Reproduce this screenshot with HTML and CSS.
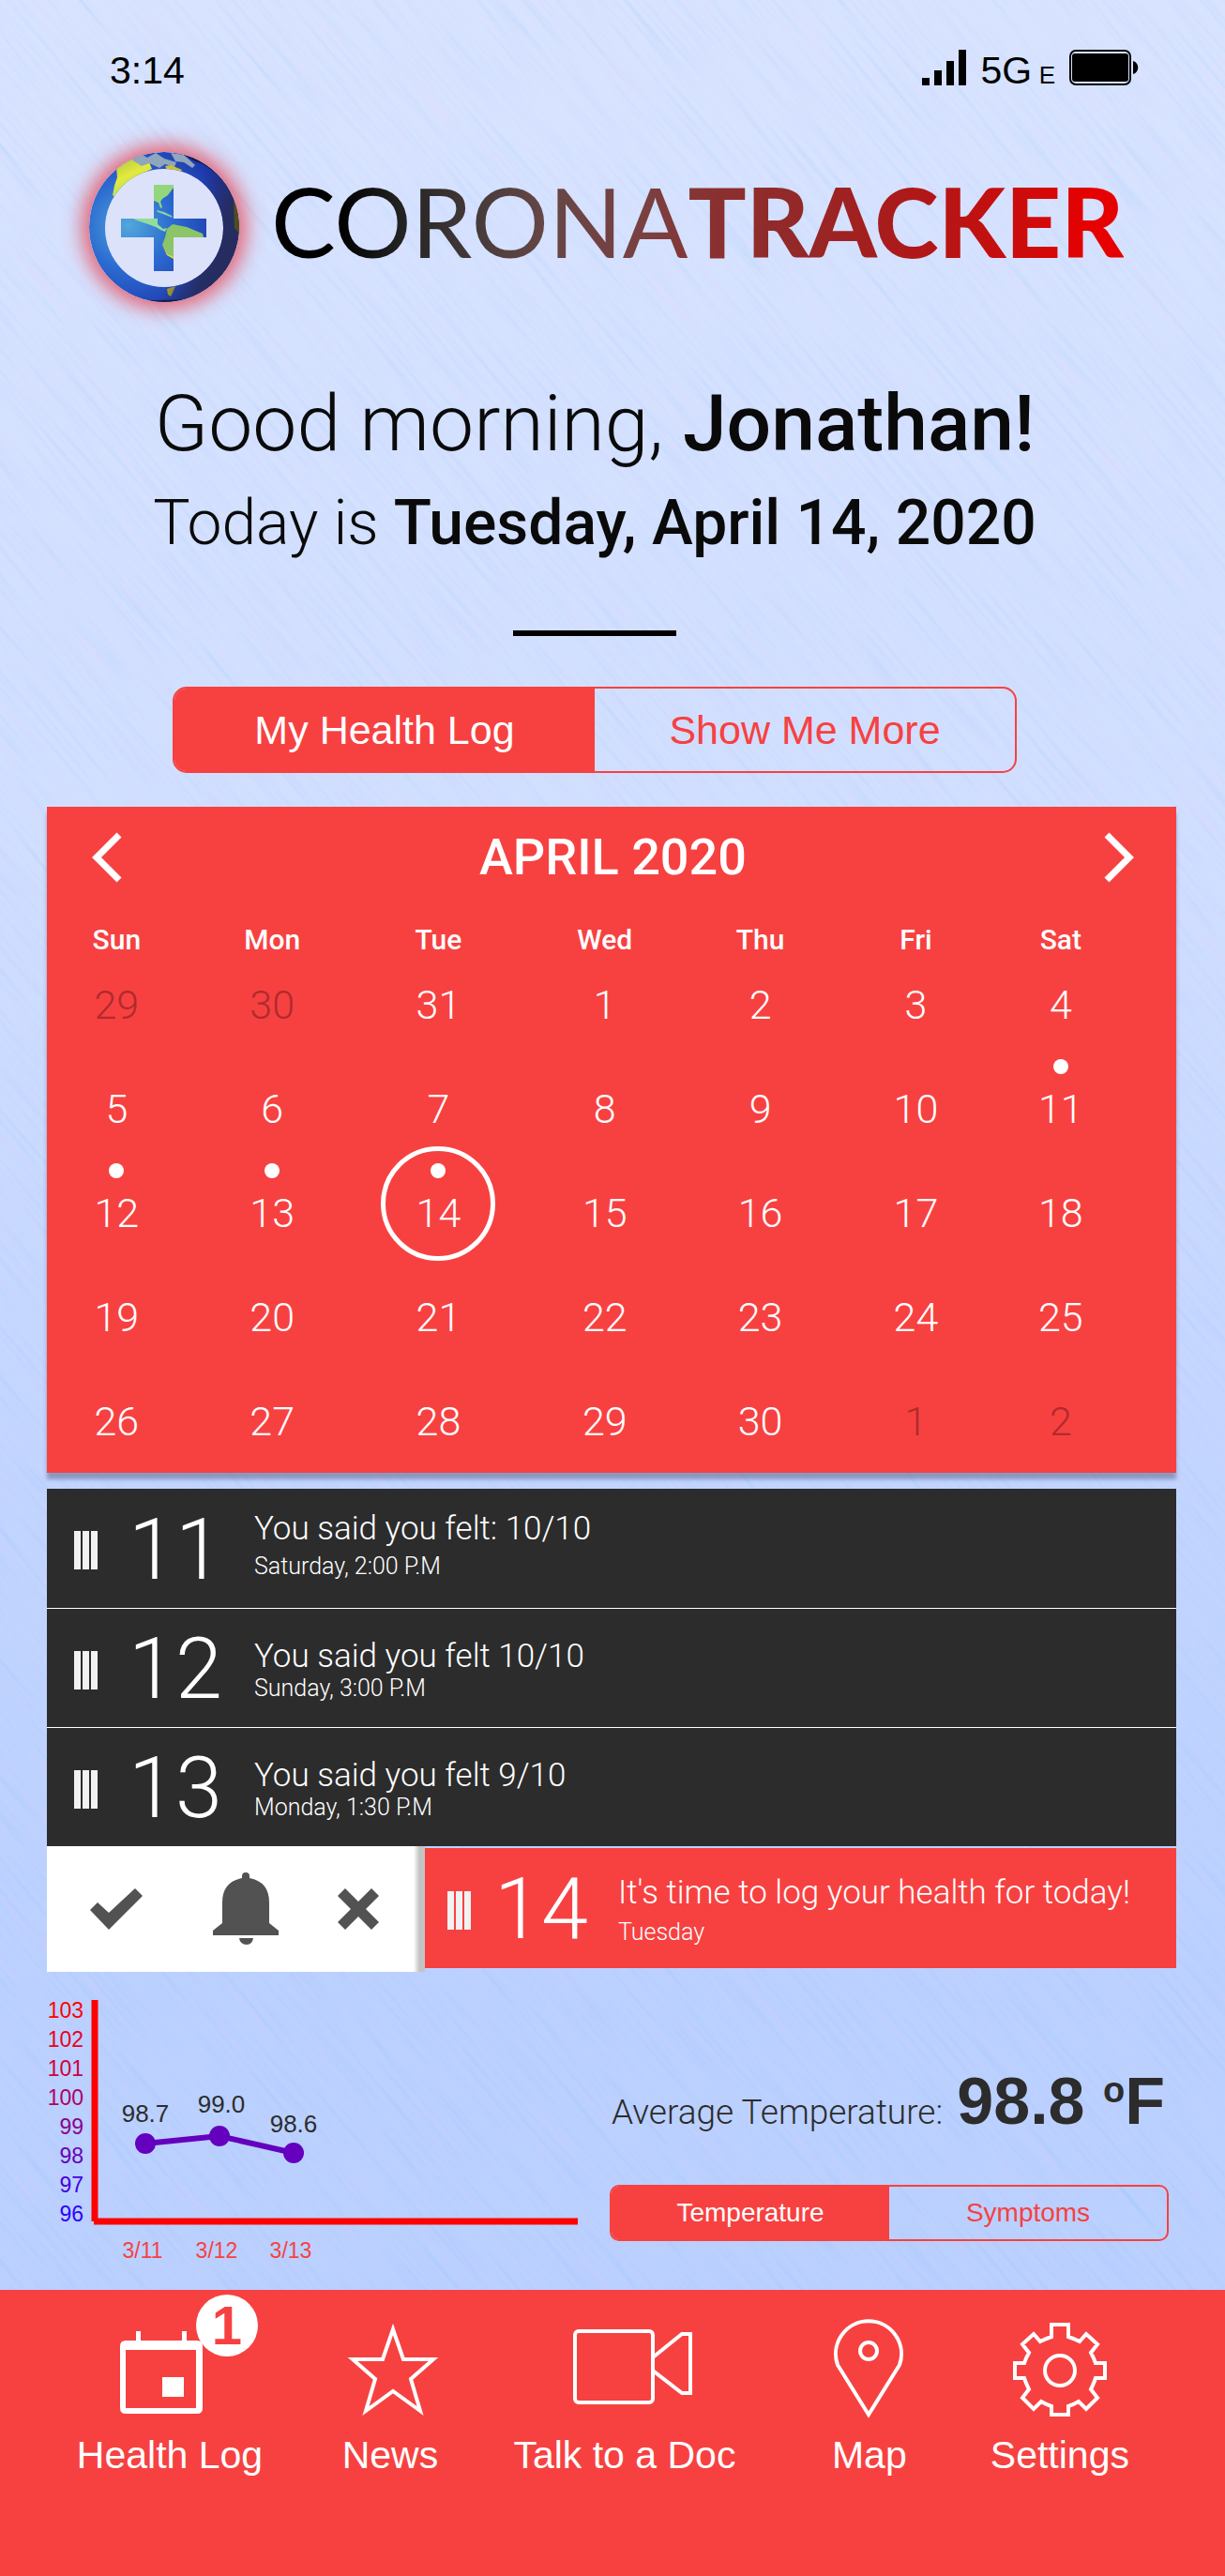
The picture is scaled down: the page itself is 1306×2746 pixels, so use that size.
FILE: index.html
```html
<!DOCTYPE html>
<html lang="en">
<head>
<meta charset="utf-8">
<meta name="viewport" content="width=device-width, initial-scale=1">
<title>CoronaTracker</title>
<link rel="stylesheet" href="styles.css">
</head>
<body>
<div class="app">
  <div class="texture" aria-hidden="true">
    <svg>
      <filter id="grain" x="0" y="0" width="100%" height="100%" color-interpolation-filters="sRGB">
        <feTurbulence type="fractalNoise" baseFrequency="0.009 0.2" numOctaves="2" seed="4"/>
        <feColorMatrix values="0 1.4 0 0 0  0 0.2 0 0 0.62  0 0 0 0 0.96  1.8 0 0 0 -0.65"/>
      </filter>
      <rect width="100%" height="100%" filter="url(#grain)"/>
    </svg>
  </div>
  <div class="status">
    <span>3:14</span>
    <div class="status-right">
      <svg class="signal" viewBox="0 0 48 38" aria-hidden="true">
        <path d="M0 30h8v8H0zM13 22h8v16h-8zM26 12h8v26h-8zM39 0h8v38h-8z"/>
      </svg>
      <span>5G <span class="network-kind">E</span></span>
      <svg class="battery" viewBox="0 0 74 38" aria-hidden="true">
        <rect x="1" y="1" width="64" height="36" rx="6" fill="none" stroke="#000" stroke-width="2"/>
        <rect x="3" y="4" width="60" height="30" rx="3"/>
        <path d="M68 12c7 2 7 12 0 14z"/>
      </svg>
    </div>
  </div>

  <header class="brand">
    <svg class="globe" viewBox="0 0 160 160" aria-hidden="true">
      <defs>
        <radialGradient id="sea" gradientUnits="userSpaceOnUse" cx="42" cy="78" r="105">
          <stop offset="0" stop-color="#52a8dc"/>
          <stop offset=".45" stop-color="#2b6ad0"/>
          <stop offset="1" stop-color="#1d34a8"/>
        </radialGradient>
        <linearGradient id="night" x1=".3" y1=".35" x2="1" y2=".6">
          <stop offset=".5" stop-color="#26305c" stop-opacity="0"/>
          <stop offset=".8" stop-color="#262c5c" stop-opacity=".9"/>
          <stop offset="1" stop-color="#262c5c"/>
        </linearGradient>
        <linearGradient id="land" x1="0" y1="0" x2=".5" y2="1">
          <stop offset="0" stop-color="#a9c24a"/>
          <stop offset=".5" stop-color="#e4ea3c"/>
          <stop offset="1" stop-color="#9ad870"/>
        </linearGradient>
        <clipPath id="ring">
          <path clip-rule="evenodd" d="M80 0a80 80 0 1 1 0 160a80 80 0 1 1 0-160zM80 18a63 63 0 1 0 0 126a63 63 0 1 0 0-126z"/>
        </clipPath>
        <clipPath id="cross">
          <path d="M69 35h21v36h35v20H90v36H69V91H34V71h35z"/>
        </clipPath>
      </defs>
      <circle cx="80" cy="81" r="64" fill="#dde2fb"/>
      <g clip-path="url(#ring)">
        <rect width="160" height="160" fill="url(#sea)"/>
        <path fill="url(#land)" d="M29 16l15-9 20 4 3 7-12 6-12 7-9 9-5 9-4-3 2-10 3-9z"/>
        <path fill="#8fa6bc" d="M45 8l12-5 5 3 9-5 9 6 13 4-2 5-10-3-6 4-11-5-8 3zM87 1l14 2 12 11-3 3-9-6-9-1z"/>
        <path fill="#c9c23c" d="M81 15l6-1 12 5-2 4-14-4z"/>
        <path fill="#b4a82c" d="M83 146l9-3-2 5-3 6-3-2z"/>
        <rect width="160" height="160" fill="url(#night)"/>
        <path fill="#4d4f1c" d="M154 50l6 17v20l-5-6z"/>
        <path fill="#0b0f28" opacity=".7" d="M95 0q45 10 58 45-20-30-40-35zM60 158q20 6 45-1-20 1-45 1z"/>
      </g>
      <g clip-path="url(#cross)">
        <rect width="160" height="160" fill="url(#sea)"/>
        <path fill="#93d67c" d="M69 35h21v3l-6 8-6 4-2 3 2 6-2 1-2-6-5-2z"/>
        <path fill="#8ed0a0" d="M72 62l8 2 8 4 1 2-8-3-8-3z"/>
        <path fill="#93dc9c" d="M47 71h26v6l6 5 4-1-2 4-5-2-5-3-8-3-12-4z"/>
        <path fill="#8cc468" d="M83 82l6-5 15 3 17 7 1 4H90v22l-6-4-6-10 3-8z"/>
        <path fill="#e8dc3c" d="M78 99l6 10 6 3v2l-7-4z"/>
      </g>
    </svg>
    <h1 class="wordmark">CORONA<b>TRACKER</b></h1>
  </header>

  <main>
    <section class="intro">
      <p class="greeting">Good morning, <strong>Jonathan!</strong></p>
      <p class="today">Today is <strong>Tuesday, April 14, 2020</strong></p>
      <hr class="rule">
      <div class="segmented segmented-large">
        <button type="button" class="active">My Health Log</button>
        <button type="button">Show Me More</button>
      </div>
    </section>

    <section class="calendar">
      <div class="calendar-head">
        <button type="button" aria-label="Previous month">
          <svg viewBox="0 0 32 54" aria-hidden="true"><path d="M29 3L5 27l24 24"/></svg>
        </button>
        <h2>APRIL 2020</h2>
        <button type="button" aria-label="Next month">
          <svg viewBox="0 0 32 54" aria-hidden="true"><path d="M3 3l24 24L3 51"/></svg>
        </button>
      </div>
      <table>
        <colgroup><col class="c1"><col class="c2"><col class="c3"><col class="c4"><col class="c5"><col class="c6"><col class="c7"></colgroup>
        <thead><tr><th>Sun</th><th>Mon</th><th>Tue</th><th>Wed</th><th>Thu</th><th>Fri</th><th>Sat</th></tr></thead>
        <tbody>
          <tr><td class="other">29</td><td class="other">30</td><td>31</td><td>1</td><td>2</td><td>3</td><td>4</td></tr>
          <tr><td>5</td><td>6</td><td>7</td><td>8</td><td>9</td><td>10</td><td class="logged">11</td></tr>
          <tr><td class="logged">12</td><td class="logged">13</td><td class="logged current">14</td><td>15</td><td>16</td><td>17</td><td>18</td></tr>
          <tr><td>19</td><td>20</td><td>21</td><td>22</td><td>23</td><td>24</td><td>25</td></tr>
          <tr><td>26</td><td>27</td><td>28</td><td>29</td><td>30</td><td class="other">1</td><td class="other">2</td></tr>
        </tbody>
      </table>
    </section>

    <section class="log">
      <article class="entry entry-spaced">
        <span class="handle"></span><span class="num">11</span>
        <div class="entry-text"><h3>You said you felt: 10/10</h3><p>Saturday, 2:00 P.M</p></div>
      </article>
      <article class="entry">
        <span class="handle"></span><span class="num">12</span>
        <div class="entry-text"><h3>You said you felt 10/10</h3><p>Sunday, 3:00 P.M</p></div>
      </article>
      <article class="entry">
        <span class="handle"></span><span class="num">13</span>
        <div class="entry-text"><h3>You said you felt 9/10</h3><p>Monday, 1:30 P.M</p></div>
      </article>
      <div class="swipe">
        <div class="actions">
          <button type="button" aria-label="Done">
            <svg width="56" height="44" viewBox="0 0 56 44" aria-hidden="true"><path d="M0 23l8-8 12 11L48 0l8 8-36 36z"/></svg>
          </button>
          <button type="button" aria-label="Remind me">
            <svg width="70" height="78" viewBox="0 0 70 78" aria-hidden="true"><path d="M31 6V4q0-4 4-4t4 4v2q21 4 21 26v22l10 8v5H0v-5l10-8V32Q10 10 31 6zM28 70h15q-1 7-7 7-7 0-8-7z"/></svg>
          </button>
          <button type="button" aria-label="Dismiss">
            <svg width="44" height="44" viewBox="0 0 44 44" aria-hidden="true"><path d="M8 0l14 14L36 0l8 8-14 14 14 14-8 8-14-14L8 44l-8-8 14-14L0 8z"/></svg>
          </button>
        </div>
        <article class="entry entry-due">
          <span class="handle"></span><span class="num">14</span>
          <div class="entry-text"><h3>It's time to log your health for today!</h3><p>Tuesday</p></div>
        </article>
      </div>
    </section>

    <section class="stats">
      <svg class="chart" viewBox="0 0 566 298" role="img" aria-label="Temperature, 3/11 to 3/13">
        <g class="scale">
          <text x="39" y="31" fill="#ff0000">103</text>
          <text x="39" y="62" fill="#e6001f">102</text>
          <text x="39" y="93" fill="#cc0040">101</text>
          <text x="39" y="124" fill="#ac0066">100</text>
          <text x="39" y="155" fill="#8c0090">99</text>
          <text x="39" y="186" fill="#6800b8">98</text>
          <text x="39" y="217" fill="#4600dc">97</text>
          <text x="39" y="248" fill="#2c00ff">96</text>
        </g>
        <path d="M51 12v236M50 248h516" stroke="#f00" stroke-width="7"/>
        <path d="M105 165l79-8 79 18" fill="none" stroke="#6400be" stroke-width="6"/>
        <g fill="#6400be"><circle cx="105" cy="165" r="11"/><circle cx="184" cy="157" r="11"/><circle cx="263" cy="175" r="11"/></g>
        <g class="values"><text x="105" y="142">98.7</text><text x="186" y="132">99.0</text><text x="263" y="153">98.6</text></g>
        <g class="dates"><text x="102" y="287">3/11</text><text x="181" y="287">3/12</text><text x="260" y="287">3/13</text></g>
      </svg>
      <div class="summary">
        <p class="average"><span>Average Temperature:</span><strong>98.8 <sup>o</sup>F</strong></p>
        <div class="segmented segmented-small">
          <button type="button" class="active">Temperature</button>
          <button type="button">Symptoms</button>
        </div>
      </div>
    </section>
  </main>

  <nav class="tabs">
    <a href="#health-log">
      <span class="icon">
        <svg viewBox="0 0 140 108" aria-hidden="true"><path fill="#fff" fill-rule="evenodd" d="M34 15h5v10h44V15h5v10h11q6 0 6 6v66q0 6-6 6H23q-6 0-6-6V31q0-6 6-6h11zM23 35v62h75V35zM62 64h23v21H62z"/></svg>
        <span class="badge">1</span>
      </span>
      Health Log
    </a>
    <a href="#news">
      <span class="icon"><svg viewBox="0 0 140 108" aria-hidden="true"><path d="M73 13l11 32h32L92 66l10 34-29-21-29 21 10-34-24-21h32z"/></svg></span>
      News
    </a>
    <a href="#talk">
      <span class="icon"><svg viewBox="0 0 140 108" aria-hidden="true"><rect x="17" y="15" width="83" height="76" rx="4"/><path d="M100 43l31-25h9v63h-9L100 57"/></svg></span>
      Talk to a Doc
    </a>
    <a href="#map">
      <span class="icon"><svg viewBox="0 0 140 108" aria-hidden="true"><path d="M69 104L36 51A35 35 0 1 1 102 51z"/><circle cx="69" cy="36" r="9"/></svg></span>
      Map
    </a>
    <a href="#settings">
      <span class="icon"><svg viewBox="0 0 140 108" aria-hidden="true"><path d="M61 8h18v13q6 2 12 5l7-8 12 11-7 9q3 5 5 11h10v16h-10q-2 6-5 12l7 9-12 12-8-8q-5 3-11 5v9H61v-9q-6-2-11-5l-8 8-12-12 7-9q-3-6-5-12H22V49h10q2-6 5-11l-7-9 12-11 7 8q6-3 12-5z"/><circle cx="70" cy="57" r="16"/></svg></span>
      Settings
    </a>
  </nav>
</div>
</body>
</html>
```
FILE: styles.css
```css
:root {
  --red: #f74141;
  --dark: #2c2c2c;
  --thin: Roboto, "Liberation Sans", sans-serif;
  --plain: "Liberation Sans", Arial, sans-serif;
}

*, *::before, *::after { box-sizing: border-box; }

body {
  margin: 0;
  font-family: var(--plain);
  color: #0a0a0a;
}

h1, h2, h3, p { margin: 0; font-weight: inherit; }

button {
  padding: 0;
  border: 0;
  background: none;
  color: inherit;
  font: inherit;
  cursor: pointer;
}

svg { display: block; }

.app {
  display: flex;
  flex-direction: column;
  position: relative;
  isolation: isolate;
  min-height: 100vh;
  background: linear-gradient(#d8e4ff, #d1dfff 32%, #c2d5ff 58%, #bbd1ff 76%, #bad0ff);
}
.texture {
  position: absolute;
  inset: 0;
  z-index: -1;
  overflow: hidden;
}
.texture svg {
  position: absolute;
  top: 50%;
  left: 50%;
  width: 3200px;
  height: 3200px;
  opacity: .14;
  transform: translate(-50%, -50%) rotate(50deg);
}

.status {
  display: flex;
  justify-content: space-between;
  align-items: flex-end;
  height: 96px;
  padding: 0 92px 0 117px;
  color: #000;
  font-size: 41px;
  line-height: 42px;
}
.status-right { display: flex; align-items: flex-end; gap: 15px; }
.network-kind { margin-left: -4px; font-size: 26px; line-height: 26px; }
.signal, .battery { height: 38px; margin-bottom: 5px; }
.signal { width: 48px; }
.battery { width: 74px; }

.brand {
  display: flex;
  gap: 34px;
  padding: 66px 95px 0;
}
.globe {
  flex: none;
  width: 160px;
  height: 160px;
  border-radius: 50%;
  box-shadow: 0 0 20px 8px rgba(232, 64, 76, .75);
}
.wordmark {
  font: 400 103px/146px Lato, sans-serif;
  white-space: nowrap;
  background: linear-gradient(90deg, #000 8%, #222 15%, #463a3a 24%, #654646 32%, #7a4040 44%, #8a3030 52%, #942828 62%, #b01818 76%, #cc0c0c 88%, #e60000 96%);
  -webkit-background-clip: text;
  background-clip: text;
  color: transparent;
}
.wordmark b { font-weight: 900; }

.intro {
  display: flex;
  flex-direction: column;
  align-items: center;
  padding: 80px 38px 36px 0;
  font-family: var(--thin);
  font-weight: 300;
}
.intro strong { font-weight: 500; }
.greeting { font-size: 84px; line-height: 100px; }
.today { margin-top: 18px; font-size: 66px; line-height: 76px; }
.rule { width: 174px; height: 6px; margin: 76px 0 54px; border: 0; background: #000; }

.segmented {
  display: grid;
  grid-template-columns: 1fr 1fr;
  overflow: hidden;
  border: 2px solid var(--red);
  color: var(--red);
  font-family: var(--plain);
  font-weight: 400;
}
.segmented .active { background: var(--red); color: #fff; }
.segmented-large { width: 900px; max-width: 100%; height: 92px; border-radius: 15px; font-size: 43px; }
.segmented-small { height: 60px; border-radius: 10px; font-size: 28px; }

.calendar {
  margin: 0 52px 17px 50px;
  background: var(--red);
  box-shadow: 0 7px 4px rgba(70, 80, 120, .45);
  color: #fff;
}
.calendar-head {
  display: flex;
  justify-content: space-between;
  align-items: center;
  height: 107px;
  padding: 0 45px 0 48px;
}
.calendar-head h2 { font: 500 54px/64px var(--thin); }
.calendar-head svg { width: 32px; height: 54px; fill: none; stroke: #fff; stroke-width: 7; }
.calendar table { width: 95%; table-layout: fixed; border-collapse: collapse; font-family: var(--thin); }
.c1 { width: 13%; }
.c2 { width: 16%; }
.c3 { width: 15%; }
.c4 { width: 16%; }
.c5 { width: 13%; }
.c6 { width: 16%; }
.c7 { width: 11%; }
.calendar th { padding: 22px 0 0; font-size: 30px; font-weight: 500; line-height: 26px; }
.calendar td {
  position: relative;
  height: 111px;
  padding: 0;
  font-size: 43px;
  font-weight: 300;
  text-align: center;
}
.calendar .other { color: #b02a2c; }
.logged::before {
  content: "";
  position: absolute;
  top: 3px;
  left: 50%;
  width: 16px;
  height: 16px;
  margin-left: -8px;
  border-radius: 50%;
  background: #fff;
}
.current::after {
  content: "";
  position: absolute;
  top: -15px;
  left: 50%;
  width: 122px;
  height: 122px;
  margin-left: -61px;
  border: 5px solid #fff;
  border-radius: 50%;
}

.log { margin: 0 52px 0 50px; font-family: var(--thin); font-weight: 300; color: #fff; }
.entry {
  display: flex;
  align-items: center;
  height: 127px;
  padding: 4px 0 0 29px;
  background: var(--dark);
}
.entry + .entry { border-top: 1px solid #fff; }
.handle {
  width: 26px;
  height: 41px;
  margin-right: 32px;
  background: repeating-linear-gradient(90deg, #f2f2f2 0 7px, transparent 7px 9px);
}
.num { width: 134px; font-size: 90px; line-height: 100px; }
.entry-text { display: grid; gap: 4px; }
.entry h3 { font-size: 35px; line-height: 36px; white-space: nowrap; }
.entry p { font-size: 25px; line-height: 24px; }
.entry-spaced .entry-text { gap: 10px; padding-bottom: 12px; }

.swipe { display: grid; grid-template-columns: 403fr 801fr; }
.actions {
  display: grid;
  grid-template-columns: 148fr 128fr 112fr;
  place-items: center;
  height: 134px;
  padding-right: 15px;
  background: linear-gradient(270deg, #c4c4c4 0 6px, #fff 12px);
}
.actions svg { fill: #525252; }
.entry-due { height: 128px; margin: 2px 0 4px; padding-left: 24px; background: var(--red); }
.entry-due .handle { margin-right: 24px; }
.entry-due .num { width: 132px; }
.entry-due .entry-text { gap: 12px; }

.stats {
  display: grid;
  grid-template-columns: 566fr 596fr;
  gap: 34px;
  padding: 18px 60px 23px 50px;
}
.chart { width: 100%; font-family: var(--plain); }
.scale { font-size: 23px; text-anchor: end; }
.values { font-size: 26px; text-anchor: middle; fill: var(--dark); }
.dates { font-size: 23px; text-anchor: middle; fill: var(--red); }
.summary { padding-top: 80px; color: var(--dark); }
.average {
  display: flex;
  justify-content: space-between;
  align-items: baseline;
  height: 80px;
  margin-bottom: 49px;
  padding: 0 4px 0 2px;
  white-space: nowrap;
}
.average span { font: 300 37px/80px var(--thin); }
.average strong { font-size: 70px; line-height: 80px; }
.average sup { font-size: 38px; line-height: 1; vertical-align: 23px; }

.tabs {
  display: grid;
  grid-template-columns: 234fr 236fr 264fr 258fr 148fr;
  flex: 1;
  padding: 29px 102px 48px 64px;
  background: var(--red);
}
.tabs a {
  display: flex;
  flex-direction: column;
  align-items: center;
  color: #fff;
  font-size: 41px;
  line-height: 48px;
  text-decoration: none;
  white-space: nowrap;
}
.icon { position: relative; margin-bottom: 15px; }
.icon svg { width: 140px; height: 108px; overflow: visible; fill: none; stroke: #fff; stroke-width: 4; }
.icon svg [fill] { stroke: none; }
.badge {
  position: absolute;
  top: -24px;
  left: 98px;
  width: 66px;
  height: 66px;
  border-radius: 50%;
  background: #fff;
  color: var(--red);
  font-size: 58px;
  font-weight: 700;
  line-height: 66px;
  text-align: center;
}
```
